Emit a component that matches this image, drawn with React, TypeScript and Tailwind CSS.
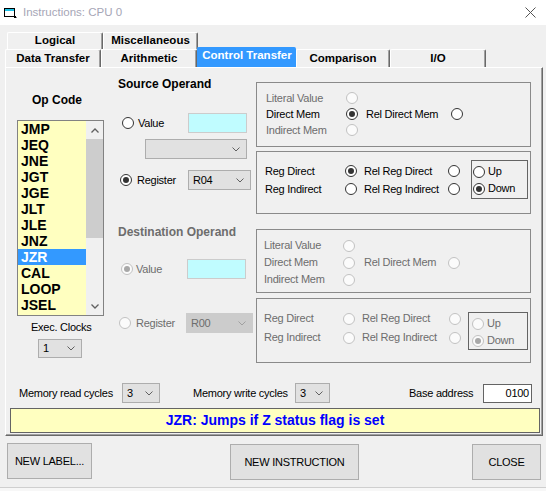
import React from 'react';

const opCodes = ['JMP', 'JEQ', 'JNE', 'JGT', 'JGE', 'JLT', 'JLE', 'JNZ', 'JZR', 'CAL', 'LOOP', 'JSEL'];

function Radio({ checked = false, disabled = false }: { checked?: boolean; disabled?: boolean }) {
  return (
    <span
      className={
        disabled
          ? 'flex items-center justify-center w-[12px] h-[12px] shrink-0 rounded-full border border-[#c2c2c2] bg-[#fbfbfb]'
          : 'flex items-center justify-center w-[12px] h-[12px] shrink-0 rounded-full border border-[#333333] bg-white'
      }
    >
      {checked && (
        <span className={disabled ? 'w-[6px] h-[6px] rounded-full bg-[#a8a8a8]' : 'w-[6px] h-[6px] rounded-full bg-[#333333]'} />
      )}
    </span>
  );
}

function Chevron({ color = '#606060' }: { color?: string }) {
  return (
    <svg width="8" height="5" viewBox="0 0 8 5">
      <path d="M0.5 0.5 L4 4 L7.5 0.5" fill="none" stroke={color} strokeWidth="1" />
    </svg>
  );
}

function Combo({ value, className, disabled = false }: { value: string; className: string; disabled?: boolean }) {
  return (
    <div
      className={`${className} flex items-center justify-between pl-[4px] pr-[6px] border ${
        disabled ? 'bg-[#cccccc] border-[#cccccc] text-[#6d6d6d]' : 'bg-[#e1e1e1] border-[#adadad]'
      }`}
    >
      <span>{value}</span>
      <Chevron color={disabled ? '#a0a0a0' : '#606060'} />
    </div>
  );
}

function Tab({ label, className, selected = false }: { label: string; className: string; selected?: boolean }) {
  return (
    <div
      className={`${className} flex items-center justify-center font-bold text-[11.5px] tracking-normal border-l border-t rounded-t-[2px] ${
        selected
          ? 'bg-[#3399ff] text-white border-[#3399ff] relative z-10 pb-[3px]'
          : 'bg-[#f0f0f0] border-white border-r border-r-[#696969] shadow-[inset_-1px_0_0_#a0a0a0]'
      }`}
    >
      {label}
    </div>
  );
}

function UpDown({ disabled = false, className }: { disabled?: boolean; className: string }) {
  const txt = disabled ? 'text-[#6d6d6d]' : 'text-black';
  return (
    <div className={`${className} border border-[#646464] flex flex-col`}>
      <div className="h-[17px] flex items-center">
        <Radio disabled={disabled} />
        <span className={`ml-[3px] ${txt}`}>Up</span>
      </div>
      <div className="h-[17px] flex items-center">
        <Radio checked disabled={disabled} />
        <span className={`ml-[3px] ${txt}`}>Down</span>
      </div>
    </div>
  );
}

export default function App() {
  return (
    <div className="w-[546px] h-[491px] bg-[#f0f0f0] flex flex-col overflow-hidden font-['Liberation_Sans',Arial,sans-serif] text-[11px] tracking-[-0.25px] text-black">
      {/* title bar */}
      <div className="h-[25px] bg-white flex items-center pl-[4px] shrink-0">
        <svg width="13" height="11" viewBox="0 0 13 11">
          <rect x="0.5" y="1.5" width="10" height="8" fill="#ffffff" stroke="#000000" />
          <rect x="1" y="2" width="9" height="2" fill="#19c1e6" />
          <path d="M10 10.5 L12.5 10.5 M11.5 9 L11.5 10.5" stroke="#000000" />
        </svg>
        <span className="ml-[6px] text-[11.5px] tracking-normal text-[#a6a6b6]">Instructions: CPU 0</span>
        <svg className="ml-auto mr-[10px]" width="11" height="11" viewBox="0 0 11 11">
          <path d="M0.5 0.5 L10.5 10.5 M10.5 0.5 L0.5 10.5" stroke="#555555" strokeWidth="1" />
        </svg>
      </div>

      {/* tabs */}
      <div className="pt-[7px] shrink-0">
        <div className="flex pl-[7px] h-[17px]">
          <Tab label="Logical" className="w-[96px] h-[17px]" />
          <Tab label="Miscellaneous" className="w-[95px] h-[17px]" />
        </div>
        <div className="flex items-end pl-[5px] h-[18px]">
          <Tab label="Data Transfer" className="w-[96px] h-[18px]" />
          <Tab label="Arithmetic" className="w-[96px] h-[18px]" />
          <Tab label="Control Transfer" className="w-[99px] h-[20px]" selected />
          <Tab label="Comparison" className="w-[94px] h-[18px]" />
          <Tab label="I/O" className="w-[96px] h-[18px]" />
        </div>
      </div>

      {/* panel */}
      <div className="ml-[5px] w-[538px] h-[369px] shrink-0 border-l border-t border-white border-r border-b border-r-[#696969] border-b-[#696969] shadow-[inset_-1px_-1px_0_#a0a0a0] flex flex-col">
        <div className="flex h-[295px]">
          {/* op code column */}
          <div className="w-[104px] flex flex-col">
            <div className="mt-[25px] h-[14px] leading-[14px] pl-[26px] text-[12px] font-bold tracking-normal">Op Code</div>
            <div className="mt-[13px] ml-[11px] w-[87px] h-[196px] border border-[#828282] flex bg-[#ffffc0]">
              <div className="w-[68px] flex flex-col">
                {opCodes.map(op => (
                  <div
                    key={op}
                    className={`h-[16px] leading-[16px] pl-[3px] text-[14px] font-bold tracking-normal ${
                      op === 'JZR' ? 'bg-[#3399ff] text-white' : ''
                    }`}
                  >
                    {op}
                  </div>
                ))}
              </div>
              <div className="w-[17px] bg-[#f0f0f0] flex flex-col">
                <div className="h-[18px] flex items-center justify-center">
                  <svg width="8" height="5" viewBox="0 0 8 5">
                    <path d="M0.5 4.5 L4 1 L7.5 4.5" fill="none" stroke="#606060" strokeWidth="1.3" />
                  </svg>
                </div>
                <div className="h-[99px] bg-[#cdcdcd]" />
                <div className="flex-1" />
                <div className="h-[17px] flex items-center justify-center">
                  <svg width="8" height="5" viewBox="0 0 8 5">
                    <path d="M0.5 0.5 L4 4 L7.5 0.5" fill="none" stroke="#606060" strokeWidth="1.3" />
                  </svg>
                </div>
              </div>
            </div>
            <div className="mt-[4px] h-[14px] leading-[14px] pl-[25px]">Exec. Clocks</div>
            <Combo value="1" className="mt-[5px] ml-[32px] w-[44px] h-[19px]" />
          </div>

          {/* operands */}
          <div className="w-[431px] flex flex-col">
            {/* source */}
            <div className="flex h-[147px]">
              <div className="w-[146px] flex flex-col">
                <div className="mt-[9px] h-[14px] leading-[14px] pl-[8px] text-[12px] font-bold tracking-normal">Source Operand</div>
                <div className="mt-[22px] h-[20px] flex items-center pl-[12px]">
                  <Radio />
                  <span className="ml-[4px] w-[50px]">Value</span>
                  <div className="w-[59px] h-[20px] bg-[#c0fcff] border border-[#cccccc]" />
                </div>
                <Combo value="" className="mt-[6px] ml-[35px] w-[102px] h-[20px]" />
                <div className="mt-[11px] h-[20px] flex items-center pl-[10px]">
                  <Radio checked />
                  <span className="ml-[5px] w-[51px]">Register</span>
                  <Combo value="R04" className="w-[63px] h-[20px]" />
                </div>
              </div>
              <div className="w-[275px] flex flex-col">
                <div className="mt-[14px] h-[65px] border border-[#8a8a8a] pt-[7px] pl-[9px] flex flex-col">
                  <div className="h-[16px] flex items-center">
                    <span className="w-[80px] text-[#6d6d6d]">Literal Value</span>
                    <Radio disabled />
                  </div>
                  <div className="h-[16px] flex items-center">
                    <span className="w-[80px]">Direct Mem</span>
                    <Radio checked />
                    <span className="ml-[8px] w-[85px]">Rel Direct Mem</span>
                    <Radio />
                  </div>
                  <div className="h-[16px] flex items-center">
                    <span className="w-[80px] text-[#6d6d6d]">Indirect Mem</span>
                    <Radio disabled />
                  </div>
                </div>
                <div className="mt-[4px] h-[63px] border border-[#8a8a8a] flex">
                  <div className="pt-[10px] pl-[8px] flex flex-col">
                    <div className="h-[18px] flex items-center">
                      <span className="w-[80px]">Reg Direct</span>
                      <Radio checked />
                      <span className="ml-[7px] w-[84px]">Rel Reg Direct</span>
                      <Radio />
                    </div>
                    <div className="h-[18px] flex items-center">
                      <span className="w-[80px]">Reg Indirect</span>
                      <Radio />
                      <span className="ml-[7px] w-[84px]">Rel Reg Indirect</span>
                      <Radio />
                    </div>
                  </div>
                  <UpDown className="ml-[11px] mt-[8px] w-[57px] h-[39px] pl-[1px] pt-[2px]" />
                </div>
              </div>
            </div>

            {/* destination */}
            <div className="flex h-[148px]">
              <div className="w-[146px] flex flex-col text-[#6d6d6d]">
                <div className="mt-[10px] h-[14px] leading-[14px] pl-[8px] text-[12px] font-bold tracking-normal">Destination Operand</div>
                <div className="mt-[20px] h-[20px] flex items-center pl-[11px]">
                  <Radio checked disabled />
                  <span className="ml-[3px] w-[51px]">Value</span>
                  <div className="w-[59px] h-[20px] bg-[#c0fcff] border border-[#cccccc]" />
                </div>
                <div className="mt-[34px] h-[20px] flex items-center pl-[9px]">
                  <Radio disabled />
                  <span className="ml-[5px] w-[50px]">Register</span>
                  <Combo value="R00" className="w-[67px] h-[20px]" disabled />
                </div>
              </div>
              <div className="w-[275px] flex flex-col text-[#6d6d6d]">
                <div className="mt-[14px] h-[64px] border border-[#8a8a8a] pt-[7px] pl-[7px] flex flex-col">
                  <div className="h-[17px] flex items-center">
                    <span className="w-[79px]">Literal Value</span>
                    <Radio disabled />
                  </div>
                  <div className="h-[17px] flex items-center">
                    <span className="w-[79px]">Direct Mem</span>
                    <Radio disabled />
                    <span className="ml-[9px] w-[84px]">Rel Direct Mem</span>
                    <Radio disabled />
                  </div>
                  <div className="h-[17px] flex items-center">
                    <span className="w-[79px]">Indirect Mem</span>
                    <Radio disabled />
                  </div>
                </div>
                <div className="mt-[5px] h-[65px] border border-[#8a8a8a] flex">
                  <div className="pt-[10px] pl-[7px] flex flex-col">
                    <div className="h-[19px] flex items-center">
                      <span className="w-[79px]">Reg Direct</span>
                      <Radio disabled />
                      <span className="ml-[7px] w-[87px]">Rel Reg Direct</span>
                      <Radio disabled />
                    </div>
                    <div className="h-[19px] flex items-center">
                      <span className="w-[79px]">Reg Indirect</span>
                      <Radio disabled />
                      <span className="ml-[7px] w-[87px]">Rel Reg Indirect</span>
                      <Radio disabled />
                    </div>
                  </div>
                  <UpDown disabled className="ml-[7px] mt-[13px] w-[60px] h-[38px] pl-[3px] pt-[2px]" />
                </div>
              </div>
            </div>
          </div>
        </div>

        {/* memory cycles */}
        <div className="mt-[20px] h-[20px] flex items-center">
          <span className="ml-[13px] w-[103px]">Memory read cycles</span>
          <Combo value="3" className="w-[38px] h-[20px]" />
          <span className="ml-[33px] w-[102px]">Memory write cycles</span>
          <Combo value="3" className="w-[35px] h-[20px]" />
          <span className="ml-[79px] w-[74px]">Base address</span>
          <div className="w-[49px] h-[19px] border border-[#646464] bg-white flex items-center justify-end pr-[2px]">0100</div>
        </div>

        {/* description */}
        <div className="mt-[5px] ml-[4px] w-[530px] h-[25px] border border-[#646464] bg-[#ffffc0] flex items-center justify-center text-[14px] font-bold tracking-normal text-[#0000ff]">
          JZR: Jumps if Z status flag is set
        </div>
      </div>

      {/* buttons */}
      <div className="mt-[7px] flex items-start shrink-0">
        <button className="ml-[7px] w-[85px] h-[36px] bg-[#e1e1e1] border border-[#adadad]">NEW LABEL...</button>
        <button className="mt-[1px] ml-[138px] w-[129px] h-[36px] bg-[#e1e1e1] border border-[#adadad]">NEW INSTRUCTION</button>
        <button className="mt-[1px] ml-[113px] w-[69px] h-[36px] bg-[#e1e1e1] border border-[#adadad]">CLOSE</button>
      </div>
      <div className="mt-auto h-[4px] border-t border-[#cfcfcf] bg-[#f7f7f7] shrink-0" />
    </div>
  );
}
